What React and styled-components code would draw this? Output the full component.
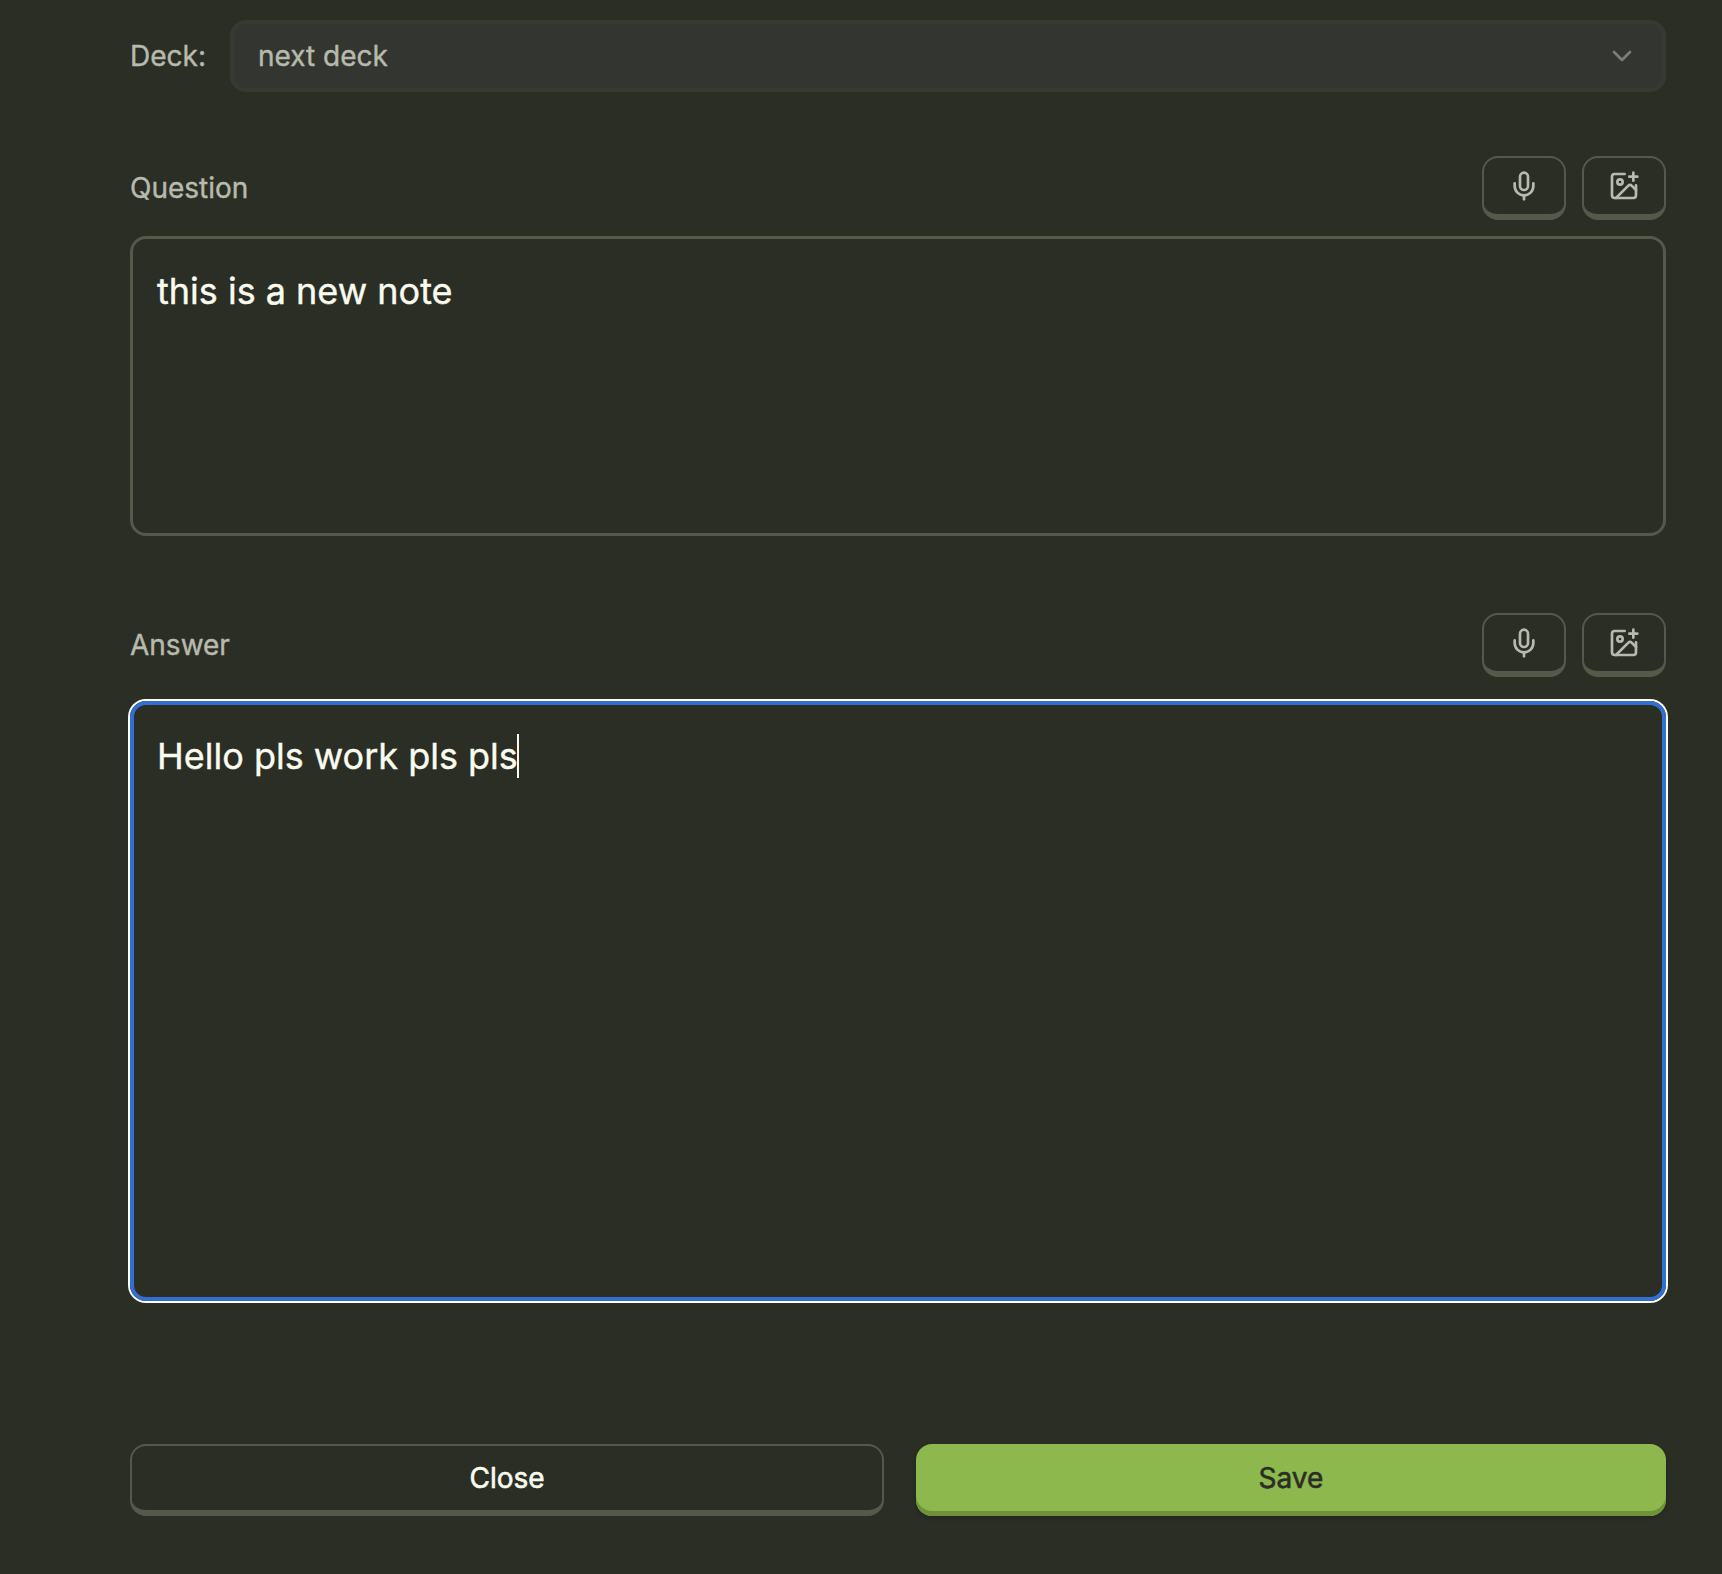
import React from "react";
import styled, { createGlobalStyle, css } from "styled-components";
import { ChevronDown, ImagePlus, Mic } from "lucide-react";

const GlobalStyle = createGlobalStyle`
  *, *::before, *::after { box-sizing: border-box; }
  body {
    margin: 0;
    background: #2b2e25;
    font-family: Inter, "Liberation Sans", sans-serif;
    -webkit-font-smoothing: antialiased;
    -webkit-text-stroke: 0.4px currentColor;
  }
`;

const Page = styled.main`
  min-height: 1574px;
  padding: 20px 56px 58px 130px;
  display: flex;
  flex-direction: column;
  background: #2b2e25;
  color: #b7baac;
  font-size: 28px;
  line-height: 40px;
`;

const DeckRow = styled.div`
  display: flex;
  align-items: center;
  height: 72px;
  margin-bottom: 64px;
`;

const Label = styled.span`
  white-space: nowrap;
`;

const DeckLabel = styled(Label)`
  width: 100px;
`;

const Select = styled.div`
  flex: 1;
  height: 72px;
  display: flex;
  align-items: center;
  justify-content: space-between;
  padding: 0 24px;
  border: 4px solid #373a33;
  border-radius: 16px;
  background: #333530;

  svg { color: #7c7e76; }
`;

const Field = styled.section`
  display: flex;
  flex-direction: column;
  gap: ${(p) => p.$gap}px;
  margin-bottom: ${(p) => p.$after}px;
`;

const FieldHeader = styled.header`
  height: 64px;
  display: flex;
  align-items: center;
  justify-content: space-between;
`;

const Tools = styled.div`
  display: flex;
  gap: 16px;
`;

const outlined = css`
  border: 2px solid #55594a;
  border-bottom-width: 6px;
  background: transparent;
`;

const ToolButton = styled.button`
  ${outlined}
  width: 84px;
  height: 64px;
  padding: 0;
  display: flex;
  align-items: center;
  justify-content: center;
  border-radius: 16px;
  color: #b7baac;
`;

const Editor = styled.div`
  height: ${(p) => p.$height}px;
  padding: ${(p) => (p.$focused ? "29px 23px" : "30px 24px")};
  display: flex;
  align-items: flex-start;
  border: ${(p) => (p.$focused ? "4px solid #326fd1" : "3px solid #55594a")};
  border-radius: 16px;
  box-shadow: ${(p) => (p.$focused ? "0 0 0 2px #ffffff" : "none")};
  color: #f9fbef;
  font-size: 36px;
  line-height: 44px;
`;

const EditorText = styled.span`
  white-space: pre;
`;

const Caret = styled.span`
  width: 2px;
  height: 44px;
  margin-left: -1px;
  background: #f9fbef;
`;

const Actions = styled.footer`
  display: flex;
  gap: 32px;
`;

const ActionButton = styled.button`
  flex: 1 1 0;
  height: 72px;
  padding: 0;
  border: 0;
  border-radius: 16px;
  font: 400 28px/40px Inter, "Liberation Sans", sans-serif;
  -webkit-text-stroke: 0.6px currentColor;
`;

const CloseButton = styled(ActionButton)`
  ${outlined}
  color: #f9fbef;
`;

const SaveButton = styled(ActionButton)`
  padding-bottom: 4px;
  background: #8db84d;
  color: #2b2e25;
  box-shadow: inset 0 -5px 0 #6e923a, 0 2px 4px rgba(0, 0, 0, 0.2);
`;

function FieldTools() {
  return (
    <Tools>
      <ToolButton aria-label="Record audio"><Mic size={32} /></ToolButton>
      <ToolButton aria-label="Add image"><ImagePlus size={32} /></ToolButton>
    </Tools>
  );
}

export default function App() {
  return (
    <>
      <GlobalStyle />
      <Page>
        <DeckRow>
          <DeckLabel>Deck:</DeckLabel>
          <Select>
            <Label>next deck</Label>
            <ChevronDown size={32} />
          </Select>
        </DeckRow>
        <Field $gap={16} $after={77}>
          <FieldHeader>
            <Label>Question</Label>
            <FieldTools />
          </FieldHeader>
          <Editor $height={300}><EditorText>this is a new note</EditorText></Editor>
        </Field>
        <Field $gap={24} $after={143}>
          <FieldHeader>
            <Label>Answer</Label>
            <FieldTools />
          </FieldHeader>
          <Editor $height={600} $focused>
            <EditorText>Hello pls work pls pls</EditorText>
            <Caret />
          </Editor>
        </Field>
        <Actions>
          <CloseButton>Close</CloseButton>
          <SaveButton>Save</SaveButton>
        </Actions>
      </Page>
    </>
  );
}
